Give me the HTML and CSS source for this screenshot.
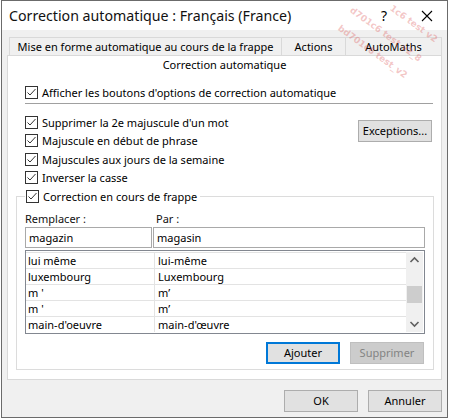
FILE: index.html
```html
<!DOCTYPE html>
<html lang="fr">
<head>
<meta charset="utf-8">
<title>Correction automatique</title>
<link rel="stylesheet" href="styles.css">
</head>
<body>
<div class="window">
  <div class="titlebar">
    <span class="title">Correction automatique : Français (France)</span>
    <span class="help">?</span>
    <span class="close"><svg width="12" height="12" viewBox="0 0 12 12"><path d="M1 1L11 11M11 1L1 11" stroke="#000" stroke-width="1.1" fill="none"/></svg></span>
  </div>
  <div class="body">
    <div class="tabs-back">
      <div class="tab t1">Mise en forme automatique au cours de la frappe</div>
      <div class="tab t2">Actions</div>
      <div class="tab t3">AutoMaths</div>
    </div>
    <div class="panel">
      <div class="tab-front">Correction automatique</div>
      <label class="cb first"><span class="box"><svg width="11" height="11" viewBox="0 0 11 11"><path d="M1.5 5.5L4 8L9.5 2" stroke="#333" stroke-width="1" fill="none"/></svg></span>Afficher les boutons d'options de correction automatique</label>
      <div class="sep"></div>
      <div class="opts">
        <div class="col">
          <label class="cb"><span class="box"><svg width="11" height="11" viewBox="0 0 11 11"><path d="M1.5 5.5L4 8L9.5 2" stroke="#333" stroke-width="1" fill="none"/></svg></span>Supprimer la 2e majuscule d'un mot</label>
          <label class="cb"><span class="box"><svg width="11" height="11" viewBox="0 0 11 11"><path d="M1.5 5.5L4 8L9.5 2" stroke="#333" stroke-width="1" fill="none"/></svg></span>Majuscule en début de phrase</label>
          <label class="cb"><span class="box"><svg width="11" height="11" viewBox="0 0 11 11"><path d="M1.5 5.5L4 8L9.5 2" stroke="#333" stroke-width="1" fill="none"/></svg></span>Majuscules aux jours de la semaine</label>
          <label class="cb"><span class="box"><svg width="11" height="11" viewBox="0 0 11 11"><path d="M1.5 5.5L4 8L9.5 2" stroke="#333" stroke-width="1" fill="none"/></svg></span>Inverser la casse</label>
        </div>
        <div class="btn exc">Exceptions...</div>
      </div>
      <fieldset class="group">
        <legend class="cb legend"><span class="box"><svg width="11" height="11" viewBox="0 0 11 11"><path d="M1.5 5.5L4 8L9.5 2" stroke="#333" stroke-width="1" fill="none"/></svg></span>Correction en cours de frappe</legend>
        <div class="labels"><span class="l1">Remplacer :</span><span class="l2">Par :</span></div>
        <div class="inputs"><div class="inp i1">magazin</div><div class="inp i2">magasin</div></div>
        <div class="list">
          <div class="rows">
            <div class="row"><span class="c1">lui même</span><span class="c2">lui-même</span></div>
            <div class="row"><span class="c1">luxembourg</span><span class="c2">Luxembourg</span></div>
            <div class="row"><span class="c1">m '</span><span class="c2">m’</span></div>
            <div class="row"><span class="c1">m '</span><span class="c2">m’</span></div>
            <div class="row"><span class="c1">main-d'oeuvre</span><span class="c2">main-d'œuvre</span></div>
          </div>
          <div class="scroll">
            <svg class="arr" width="17" height="17" viewBox="0 0 17 17"><path d="M4.5 10L8.5 6L12.5 10" stroke="#606060" stroke-width="1.6" fill="none"/></svg>
            <div class="track"><div class="thumb"></div></div>
            <svg class="arr" width="17" height="17" viewBox="0 0 17 17"><path d="M4.5 7L8.5 11L12.5 7" stroke="#606060" stroke-width="1.6" fill="none"/></svg>
          </div>
        </div>
        <div class="btns">
          <div class="btn def">Ajouter</div>
          <div class="btn dis">Supprimer</div>
        </div>
      </fieldset>
    </div>
    <div class="footer">
      <div class="btn">OK</div>
      <div class="btn">Annuler</div>
    </div>
  </div>
  <div class="wm">
    <span class="w1">1c6 test v2</span>
    <span class="w2">d701c6 test v2_8</span>
    <span class="w3">bd701c6 test_v2</span>
  </div>
</div>
</body>
</html>
```
FILE: styles.css
```css
* { box-sizing: border-box; }
html, body { margin: 0; padding: 0; background: #fff; }
body { font-family: "Noto Sans", "Open Sans", sans-serif; font-size: 11px; color: #000; }

.window {
  position: relative;
  margin-left: 1px;
  width: 447px;
  height: 418px;
  border: 1px solid #6b6b6b;
  background: #f0f0f0;
  overflow: hidden;
}

.titlebar {
  height: 29px;
  background: #fff;
  display: flex;
  align-items: center;
}
.title { font-size: 14.2px; padding-left: 7px; flex: 1; color: #111; }
.help { font-size: 14px; width: 20px; text-align: center; margin-right: 27px; }
.close { width: 12px; height: 12px; margin-right: 14px; display: flex; }

.body { padding: 7px 5px 0 5px; }

.tabs-back { display: flex; margin-left: 2px; height: 18px; }
.tab {
  border-top: 1px solid #d9d9d9;
  border-left: 1px solid #d9d9d9;
  text-align: center;
  line-height: 17px;
  white-space: nowrap;
}
.t1 { width: 272px; }
.t2 { width: 64px; }
.t3 { width: 97px; border-right: 1px solid #d9d9d9; }

.panel {
  width: 435px;
  background: #fff;
  border: 1px solid #d9d9d9;
  padding-bottom: 9px;
}
.tab-front { height: 18px; line-height: 17px; text-align: center; }

.cb { display: flex; align-items: center; height: 18.5px; white-space: nowrap; }
.box {
  width: 13px; height: 13px;
  border: 1px solid #333;
  background: #fff;
  margin-right: 4px;
  display: flex; align-items: center; justify-content: center;
  flex: none;
}
.first { margin: 9px 0 0 17px; height: 18px; }
.sep { margin: 2px 0 0 17px; width: 408px; height: 1px; background: #a0a0a0; }

.opts { display: flex; justify-content: space-between; margin-top: 9px; padding-left: 17px; padding-right: 9px; }
.exc { width: 80px; margin-top: 7px; }

.btn {
  height: 22px;
  width: 74px;
  background: #e1e1e1;
  border: 1px solid #adadad;
  text-align: center;
  line-height: 20px;
}
.def { border: 2px solid #0078d7; line-height: 18px; }
.dis { background: #cccccc; border-color: #bfbfbf; color: #838383; }

.group {
  margin: 0 7px 0 8px;
  width: 418px;
  border: 1px solid #dcdcdc;
  padding: 0 8px 5px 8px;
  min-width: 0;
}
.legend { padding: 0 3px 0 1px; margin-left: 0; }

.labels { display: flex; height: 17px; margin-top: 4px; line-height: 17px; color: #111; }
.l1 { width: 131px; }

.inputs { display: flex; gap: 1px; }
.inp {
  height: 21px;
  border: 1px solid #a9a9a9;
  background: #fff;
  line-height: 19px;
  padding-left: 3px;
}
.i1 { width: 127px; }
.i2 { width: 272px; }

.list {
  margin-top: 2px;
  height: 84px;
  width: 400px;
  border: 1px solid #828790;
  display: flex;
  padding: 1px 1px 1px 0;
}
.rows { flex: 1; }
.row {
  display: flex;
  height: 16px;
  border-top: 1px solid #e3e3e3;
  line-height: 15px;
}
.c1 { width: 129px; padding-left: 2px; border-right: 1px solid #e3e3e3; }
.c2 { padding-left: 3px; }

.scroll {
  width: 17px;
  background: #f0f0f0;
  display: flex;
  flex-direction: column;
}
.arr { flex: none; }
.track { flex: 1; padding-top: 17px; }
.thumb { margin: 0 1px; height: 17px; background: #cdcdcd; }

.btns { display: flex; justify-content: flex-end; gap: 10px; margin-top: 8px; padding-right: 1px; }

.footer { display: flex; justify-content: flex-end; gap: 10px; margin-top: 10px; }

.wm { position: absolute; left: 0; top: 0; width: 100%; height: 100%; pointer-events: none; }
.wm span {
  position: absolute;
  font-family: "DejaVu Sans", sans-serif;
  font-size: 9px;
  font-weight: bold;
  color: rgba(220, 90, 90, 0.35);
  transform: rotate(36deg);
  transform-origin: 0 0;
  white-space: nowrap;
}
.w1 { left: 392px; top: 2px; }
.w2 { left: 352px; top: 4px; }
.w3 { left: 340px; top: 22px; }
```
